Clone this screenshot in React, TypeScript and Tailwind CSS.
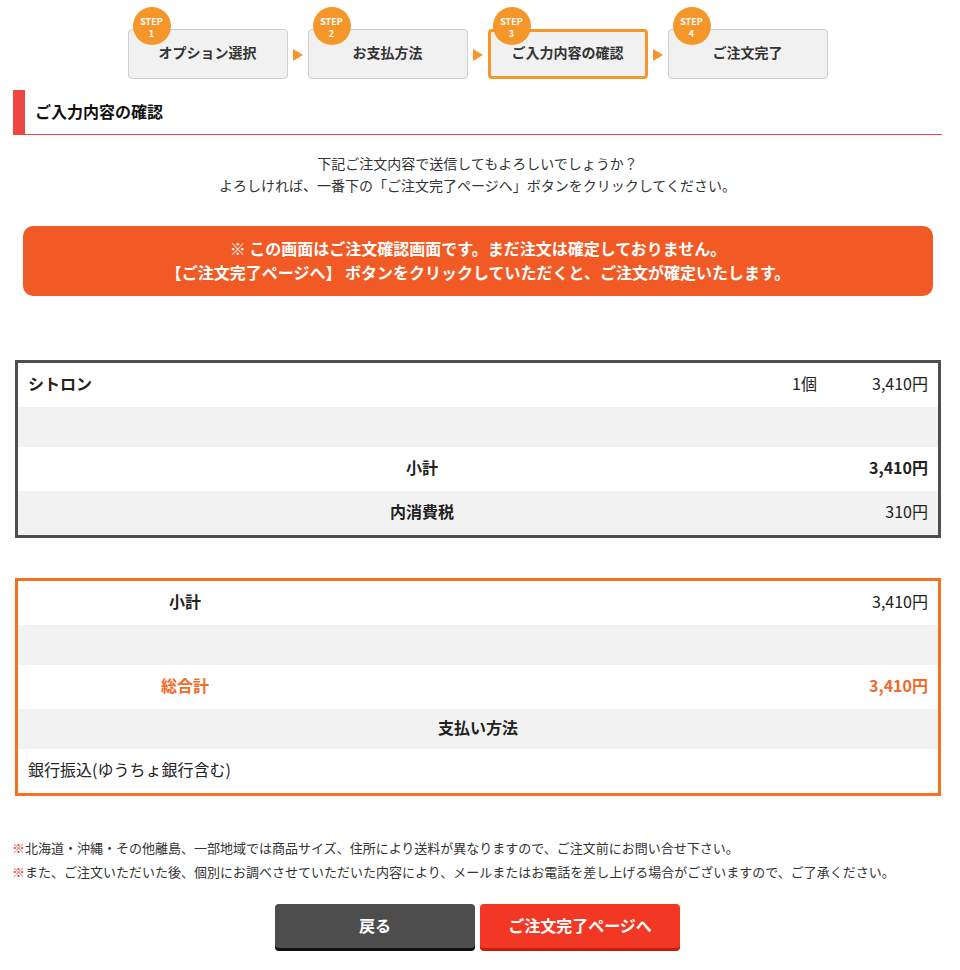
const font = { fontFamily: '"Noto Sans CJK JP", "Noto Sans", sans-serif' };

const steps = [
  { no: 1, label: 'オプション選択' },
  { no: 2, label: 'お支払方法' },
  { no: 3, label: 'ご入力内容の確認', active: true },
  { no: 4, label: 'ご注文完了' },
];

function StepBar() {
  return (
    <div className="flex items-end justify-center pt-[7px]">
      {steps.map((s, i) => (
        <div key={s.no} className="flex items-end">
          <div className="relative pt-[22px]">
            <div
              className={
                s.active
                  ? 'flex h-[50px] w-[160px] items-center justify-center rounded-[4px] border-[3px] border-[#f5962a] bg-[#f1f1f1] pb-[3px]'
                  : 'flex h-[50px] w-[160px] items-center justify-center rounded-[4px] border border-[#cfcfcf] bg-[#f1f1f1] pb-[3px]'
              }
            >
              <span className="text-[14px] font-bold text-[#333]">{s.label}</span>
            </div>
            <div className="absolute left-[5px] top-0 flex h-[38px] w-[38px] flex-col items-center justify-center gap-[3px] rounded-full bg-[#f5962a] pt-[2px] text-white">
              <span className="text-[9px] font-bold leading-[9px]">STEP</span>
              <span className="text-[9px] font-bold leading-[9px]">{s.no}</span>
            </div>
          </div>
          {i < steps.length - 1 && (
            <div className="mx-[5px] mb-[18px] h-0 w-0 border-y-[6px] border-l-[10px] border-y-transparent border-l-[#f5962a]" />
          )}
        </div>
      ))}
    </div>
  );
}

export default function App() {
  return (
    <div className="min-h-[970px] bg-white text-[#222]" style={font}>
      <div className="ml-[13px] w-[929px]">
        <StepBar />

        {/* 見出し */}
        <div className="mt-[11px] flex h-[45px] items-center border-b border-[#e9473f] border-l-[12px] border-l-[#ee4742] pb-[3px] pl-[10px]">
          <h2 className="text-[16px] font-bold text-[#111]">ご入力内容の確認</h2>
        </div>

        <div className="mt-[17px] text-center text-[14px] leading-[22px] text-[#333]">
          <p>下記ご注文内容で送信してもよろしいでしょうか？</p>
          <p>よろしければ、一番下の「ご注文完了ページへ」ボタンをクリックしてください。</p>
        </div>

        <div className="ml-[10px] mt-[30px] flex h-[70px] w-[910px] flex-col items-center justify-center rounded-[10px] bg-[#f15a25] pb-[2px] text-[16px] font-bold leading-[24px] text-white">
          <p>※ この画面はご注文確認画面です。まだ注文は確定しておりません。</p>
          <p>【ご注文完了ページへ】 ボタンをクリックしていただくと、ご注文が確定いたします。</p>
        </div>

        {/* 商品テーブル */}
        <div className="ml-[2px] mt-[64px] w-[926px] border-[3px] border-[#4f4f4f] text-[16px]">
          <div className="flex h-[44px] items-center bg-white px-[10px] pb-[5px]">
            <span className="flex-1 font-bold">シトロン</span>
            <span className="mr-[11px]">1個</span>
            <span className="w-[100px] text-right">3,410円</span>
          </div>
          <div className="h-[40px] bg-[#f2f2f2]" />
          <div className="grid h-[44px] grid-cols-[808px_1fr] items-center bg-white pb-[5px]">
            <span className="text-center font-bold">小計</span>
            <span className="pr-[10px] text-right font-bold">3,410円</span>
          </div>
          <div className="grid h-[44px] grid-cols-[808px_1fr] items-center bg-[#f2f2f2] pb-[5px]">
            <span className="text-center font-bold">内消費税</span>
            <span className="pr-[10px] text-right">310円</span>
          </div>
        </div>

        {/* 合計テーブル */}
        <div className="ml-[2px] mt-[40px] w-[926px] border-[3px] border-[#f7701f] text-[16px]">
          <div className="grid h-[44px] grid-cols-[334px_1fr] items-center bg-white pb-[5px]">
            <span className="text-center font-bold">小計</span>
            <span className="pr-[10px] text-right">3,410円</span>
          </div>
          <div className="h-[40px] bg-[#f2f2f2]" />
          <div className="grid h-[44px] grid-cols-[334px_1fr] items-center bg-white pb-[5px] text-[#f26b2b]">
            <span className="text-center font-bold">総合計</span>
            <span className="pr-[10px] text-right font-bold">3,410円</span>
          </div>
          <div className="flex h-[40px] items-center justify-center bg-[#f2f2f2] pb-[4px] font-bold">支払い方法</div>
          <div className="flex h-[44px] items-center bg-white px-[10px] pb-[5px]">銀行振込(ゆうちょ銀行含む)</div>
        </div>

        <div className="-ml-[1px] mt-[40px] text-[13px] leading-[24px] text-[#333]">
          <p>
            <span className="text-[#e5392c]">※</span>北海道・沖縄・その他離島、一部地域では商品サイズ、住所により送料が異なりますので、ご注文前にお問い合せ下さい。
          </p>
          <p>
            <span className="text-[#e5392c]">※</span>また、ご注文いただいた後、個別にお調べさせていただいた内容により、メールまたはお電話を差し上げる場合がございますので、ご了承ください。
          </p>
        </div>

        <div className="mt-[20px] flex justify-center gap-[5px] pb-[20px]">
          <button className="h-[44px] w-[200px] rounded-[4px] bg-[#4d4d4d] pb-[3px] text-[16px] font-bold text-white shadow-[0_3px_0_#111]">
            戻る
          </button>
          <button className="h-[44px] w-[200px] rounded-[4px] bg-[#f23825] pb-[3px] text-[16px] font-bold text-white shadow-[0_3px_0_#c41d0c]">
            ご注文完了ページへ
          </button>
        </div>
      </div>
    </div>
  );
}
